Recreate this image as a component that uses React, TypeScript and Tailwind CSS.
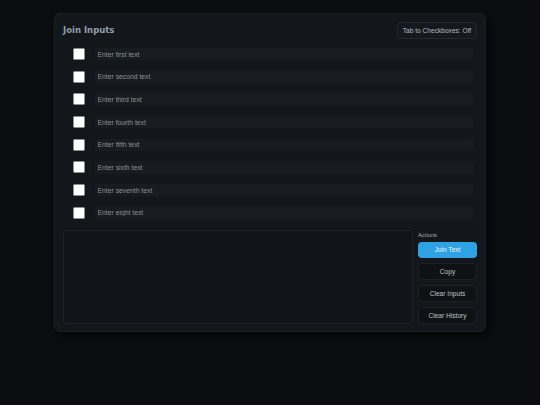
const FIELDS = [
  'Enter first text',
  'Enter second text',
  'Enter third text',
  'Enter fourth text',
  'Enter fifth text',
  'Enter sixth text',
  'Enter seventh text',
  'Enter eight text',
];

const ACTIONS = ['Copy', 'Clear Inputs', 'Clear History'];

export default function App() {
  return (
    <div className="min-h-[405px] w-full bg-[#0b0d10] pt-[13px] pl-[54px] font-['Liberation_Sans',Arial,sans-serif]">
      <div className="flex h-[319px] w-[432px] flex-col rounded-[6px] border border-[#1b2025] bg-[#13171b] px-[8px] pt-[8px] pb-[8px] shadow-[4px_4px_8px_rgba(0,0,0,0.6)]">
        {/* Header */}
        <div className="flex h-[17px] items-center justify-between">
          <h1 className="font-['DejaVu_Sans',sans-serif] text-[8.5px] font-bold text-[#949daa]">
            Join Inputs
          </h1>
          <button className="flex h-[17px] w-[80px] items-center justify-center rounded-[4px] border border-[#22282d] bg-[#15191d] text-[6.6px] text-[#b2b8be]">
            Tab to Checkboxes: Off
          </button>
        </div>

        {/* Inputs */}
        <div className="mt-[9px] flex flex-col gap-[10.7px] pr-[3px]">
          {FIELDS.map((placeholder) => (
            <div key={placeholder} className="flex h-[12px] items-center pl-[10px]">
              <span className="h-[12px] w-[12px] shrink-0 rounded-[1.5px] border border-[#8a8f94] bg-white" />
              <input
                placeholder={placeholder}
                className="ml-[10px] h-[12.5px] flex-1 rounded-[3px] bg-[#181c20] px-[2.5px] text-[6.8px] text-[#c8cdd2] outline-none placeholder:text-[#8b9197]"
              />
            </div>
          ))}
        </div>

        {/* Output + actions */}
        <div className="mt-[11px] flex flex-1 gap-[5px]">
          <div className="flex-1 rounded-[3px] border border-[#1d2226] bg-[#111418]" />
          <div className="flex w-[59px] flex-col">
            <p className="h-[12px] pt-[1px] text-[5.8px] text-[#a4aab0]">Actions</p>
            <button className="h-[16.5px] rounded-[4px] bg-[#2ea2e2] text-[6.6px] text-[#eef7fd]">
              Join Text
            </button>
            {ACTIONS.map((label) => (
              <button
                key={label}
                className="mt-[5px] h-[17px] rounded-[4px] border border-[#1c2125] bg-[#0f1215] text-[6.6px] text-[#bec3c8]"
              >
                {label}
              </button>
            ))}
          </div>
        </div>
      </div>
    </div>
  );
}
